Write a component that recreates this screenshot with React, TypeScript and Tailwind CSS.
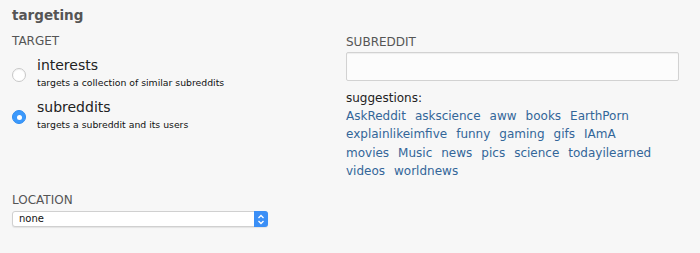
import React from "react";

const font = { fontFamily: '"DejaVu Sans", Verdana, sans-serif' };

function Radio({ checked }: { checked: boolean }) {
  if (checked) {
    return (
      <div className="mt-[11px] w-[14px] h-[14px] rounded-full bg-[#3b99fc] border border-[#2f8cf0] flex items-center justify-center shrink-0">
        <div className="w-[5px] h-[5px] rounded-full bg-white" />
      </div>
    );
  }
  return (
    <div className="mt-[11px] w-[14px] h-[14px] rounded-full bg-white border border-[#c8c8c8] shadow-[inset_0_1px_1px_rgba(0,0,0,0.05)] shrink-0" />
  );
}

const links = [
  ["AskReddit", "askscience", "aww", "books", "EarthPorn"],
  ["explainlikeimfive", "funny", "gaming", "gifs", "IAmA"],
  ["movies", "Music", "news", "pics", "science", "todayilearned"],
  ["videos", "worldnews"],
];

export default function App() {
  return (
    <div className="w-[700px] h-[253px] bg-[#f7f7f7] overflow-hidden text-[#222]" style={font}>
      <div className="pl-[12px] pt-[7px]">
        <div className="text-[13.5px] leading-[17px] font-bold text-[#555]">targeting</div>
        <div className="flex">
          <div className="w-[334px]">
            <div className="mt-[10px] text-[12px] leading-[14px] text-[#555] uppercase">target</div>
            <div className="mt-[9px] flex items-start gap-[11px]">
              <Radio checked={false} />
              <div>
                <div className="text-[14px] leading-[17px] text-[#222]">interests</div>
                <div className="mt-[3px] text-[9.3px] leading-[12px] text-[#111]">targets a collection of similar subreddits</div>
              </div>
            </div>
            <div className="mt-[10px] flex items-start gap-[11px]">
              <Radio checked={true} />
              <div>
                <div className="text-[14px] leading-[17px] text-[#222]">subreddits</div>
                <div className="mt-[3px] text-[9.3px] leading-[12px] text-[#111]">targets a subreddit and its users</div>
              </div>
            </div>
            <div className="mt-[62px] text-[12px] leading-[14px] text-[#555] uppercase">location</div>
            <div className="mt-[4px] w-[256px] h-[16px] bg-white rounded-[3px] border border-[#d0d0d0] flex items-center shadow-[0_1px_1px_rgba(0,0,0,0.08)]">
              <span className="flex-1 pl-[6px] text-[10px] leading-[14px] text-[#111]">none</span>
              <div className="w-[14px] h-[16px] -mr-px rounded-r-[3px] bg-[#3b8ff6] flex items-center justify-center">
                <svg width="8" height="11" viewBox="0 0 8 11" fill="none" stroke="white" strokeWidth="1.3">
                  <path d="M1.5 4 L4 1.5 L6.5 4" />
                  <path d="M1.5 7 L4 9.5 L6.5 7" />
                </svg>
              </div>
            </div>
          </div>
          <div className="w-[333px]">
            <div className="mt-[11px] text-[12px] leading-[14px] text-[#555] uppercase">subreddit</div>
            <div className="mt-[3px] h-[29px] bg-[#fcfcfc] border border-[#d2d2d2] rounded-[2px] shadow-[inset_0_1px_1px_rgba(0,0,0,0.06)]" />
            <div className="mt-[9px] text-[12px] leading-[16.5px] text-[#222]">suggestions:</div>
            <div className="text-[12px] leading-[18.5px] text-[#369]">
              {links.map((row, i) => (
                <div key={i} className="flex gap-[9px]">
                  {row.map((l) => (
                    <span key={l}>{l}</span>
                  ))}
                </div>
              ))}
            </div>
          </div>
        </div>
      </div>
    </div>
  );
}
